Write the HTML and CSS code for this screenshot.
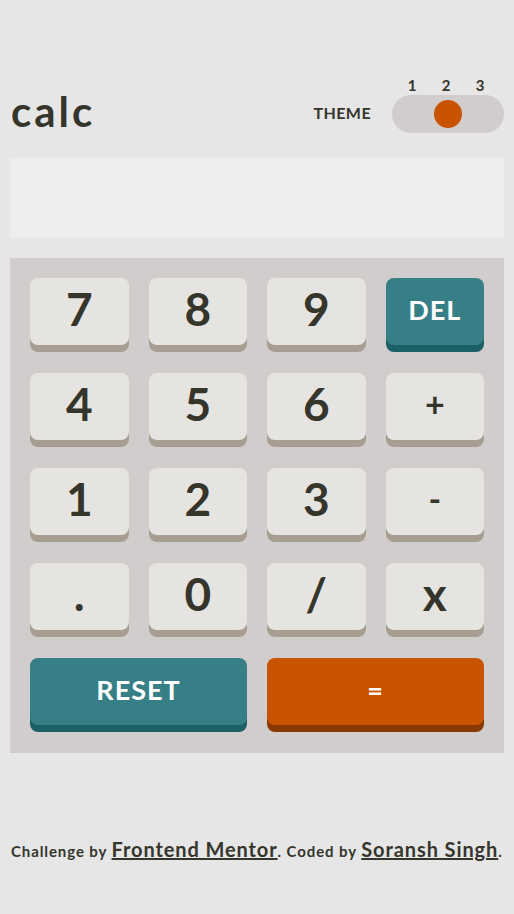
FILE: index.html
```html
<!DOCTYPE html>
<html lang="en">
<head>
    <meta charset="UTF-8">
    <meta name="viewport" content="width=device-width, initial-scale=1.0">
    <title>Calculator app</title>
    <link rel="stylesheet" href="styles.css">
</head>
<body>
    <main class="calc">
        <header class="top">
            <h1 class="logo">calc</h1>
            <div class="theme">
                <span class="theme-label">THEME</span>
                <div class="switch-wrap">
                    <div class="switch-nums">
                        <span>1</span>
                        <span>2</span>
                        <span>3</span>
                    </div>
                    <div class="switch">
                        <span class="knob"></span>
                    </div>
                </div>
            </div>
        </header>

        <div class="screen"></div>

        <div class="keypad">
            <button class="key">7</button>
            <button class="key">8</button>
            <button class="key">9</button>
            <button class="key key-blue">DEL</button>

            <button class="key">4</button>
            <button class="key">5</button>
            <button class="key">6</button>
            <button class="key key-op">+</button>

            <button class="key">1</button>
            <button class="key">2</button>
            <button class="key">3</button>
            <button class="key key-op">-</button>

            <button class="key">.</button>
            <button class="key">0</button>
            <button class="key">/</button>
            <button class="key">x</button>

            <button class="key key-blue key-wide">RESET</button>
            <button class="key key-red key-wide">=</button>
        </div>
    </main>

    <footer class="credit">
        Challenge by <a href="#">Frontend Mentor</a>. Coded by <a href="#">Soransh Singh</a>.
    </footer>
</body>
</html>
```

FILE: styles.css
```css
body {
    margin: 0;
    padding: 0 10px;
    background-color: #e6e6e6;
    color: #35352c;
    font-family: Lato, "Noto Sans", sans-serif;
}
.top {
    display: flex;
    justify-content: space-between;
    align-items: flex-end;
    padding-top: 77px;
}
.logo {
    margin: 0 0 1px 1px;
    font-size: 42px;
    line-height: 1;
    font-weight: 700;
    letter-spacing: 3px;
}
.theme {
    display: flex;
    align-items: flex-end;
    gap: 21px;
}
.theme-label {
    font-size: 16px;
    font-weight: 700;
    letter-spacing: 0.4px;
    line-height: 16px;
    margin-bottom: 12px;
}
.switch-nums {
    display: grid;
    grid-template-columns: repeat(3, 34px);
    padding-left: 3px;
    margin-bottom: 2px;
    font-size: 15px;
    font-weight: 700;
    line-height: 16px;
    text-align: center;
}
.switch {
    display: flex;
    align-items: center;
    width: 112px;
    height: 38px;
    box-sizing: border-box;
    padding: 0 5px 0 42px;
    border-radius: 19px;
    background-color: #d2cdcd;
}
.knob {
    width: 28px;
    height: 28px;
    border-radius: 50%;
    background-color: #c85402;
}
.screen {
    height: 80px;
    margin-top: 25px;
    background-color: #ededed;
}
.keypad {
    display: grid;
    grid-template-columns: repeat(4, 1fr);
    grid-auto-rows: 67px;
    column-gap: 20px;
    row-gap: 28px;
    margin-top: 20px;
    padding: 20px 20px 28px;
    background-color: #d2cdcd;
}
.key {
    display: flex;
    align-items: center;
    justify-content: center;
    padding: 0 0 6px;
    border: none;
    border-radius: 8px;
    background-color: #e5e4e0;
    box-shadow: 0 7px 0 #a79e91;
    color: #35352c;
    font-family: Lato, "Noto Sans", sans-serif;
    font-size: 46px;
    font-weight: 700;
    line-height: 1;
    cursor: pointer;
}
.key-op {
    font-size: 34px;
}
.key-blue,
.key-red {
    color: #ffffff;
    font-size: 27px;
    letter-spacing: 1px;
    padding-bottom: 5px;
}
.key-blue {
    background-color: #377f86;
    box-shadow: 0 7px 0 #1b6066;
}
.key-red {
    background-color: #c85402;
    box-shadow: 0 7px 0 #873901;
}
.key-wide {
    grid-column: span 2;
}
.credit {
    margin-top: 84px;
    padding-left: 1px;
    font-size: 15px;
    font-weight: 700;
    line-height: 24px;
    letter-spacing: 0.9px;
}
.credit a {
    color: #35352c;
    font-size: 20px;
    letter-spacing: 0.9px;
    text-decoration: underline;
}
```
